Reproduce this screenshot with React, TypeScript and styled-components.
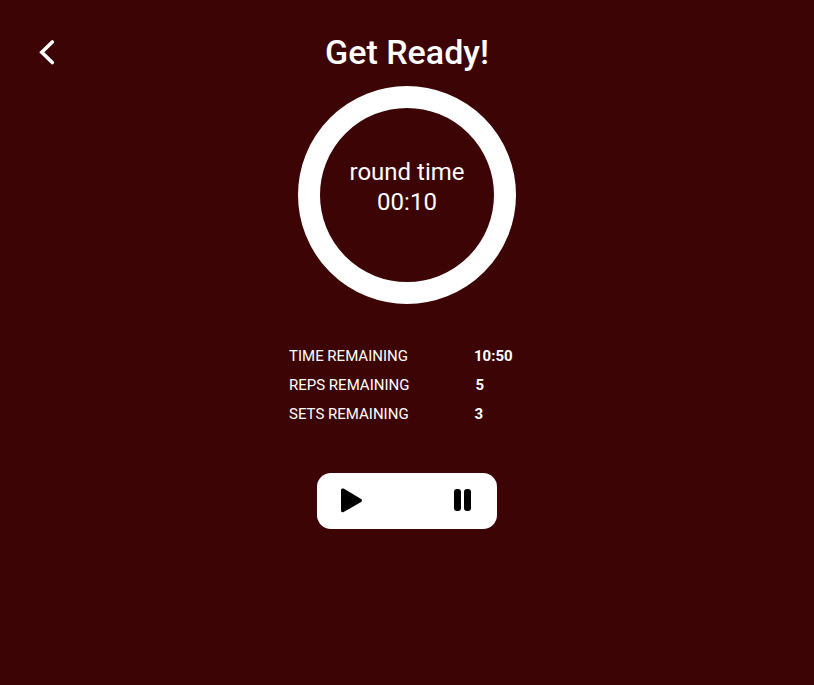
import React from "react";
import styled, { createGlobalStyle } from "styled-components";

const GlobalStyle = createGlobalStyle`
  *, *::before, *::after { box-sizing: border-box; }
  body {
    margin: 0;
    background: #3c0404;
    color: #fff;
    font-family: Roboto, "Liberation Sans", sans-serif;
  }
`;

const Page = styled.main`
  display: flex;
  flex-direction: column;
  align-items: center;
  min-height: 100vh;
  padding: 32px;
`;

const Header = styled.header`
  display: grid;
  grid-template-columns: 32px 1fr 32px;
  align-items: center;
  width: 100%;
  height: 40px;
`;

const IconButton = styled.button`
  display: flex;
  align-items: center;
  justify-content: center;
  width: 32px;
  height: 32px;
  padding: 0;
  border: 0;
  background: transparent;
  color: inherit;
  cursor: pointer;
`;

const Title = styled.h1`
  margin: 0;
  font-size: 34px;
  line-height: 38px;
  font-weight: 500;
  text-align: center;
`;

const Dial = styled.section`
  display: flex;
  flex-direction: column;
  align-items: center;
  width: 218px;
  height: 218px;
  margin-top: 14px;
  padding-top: 49px;
  border: 22px solid #fff;
  border-radius: 50%;
  font-size: 24px;
  line-height: 30px;
`;

const Stats = styled.dl`
  display: flex;
  flex-direction: column;
  width: 236px;
  margin: 38px 0 0;
`;

const Stat = styled.div`
  display: flex;
  gap: 66px;
  font-size: 15px;
  line-height: 29px;
`;

const StatName = styled.dt`
  text-transform: uppercase;
  white-space: nowrap;
`;

const StatValue = styled.dd`
  margin: 0;
  font-weight: 700;
`;

const Controls = styled.div`
  display: flex;
  justify-content: space-between;
  align-items: center;
  width: 180px;
  height: 56px;
  margin-top: 44px;
  padding: 0 18px;
  border-radius: 14px;
  background: #fff;
  color: #000;
`;

const stats = [
  { name: "Time remaining", value: "10:50" },
  { name: "Reps remaining", value: "5" },
  { name: "Sets remaining", value: "3" },
];

export default function App() {
  return (
    <>
      <GlobalStyle />
      <Page>
        <Header>
          <IconButton type="button" aria-label="Back">
            <svg width="32" height="32" viewBox="0 0 32 32" fill="none" stroke="currentColor" strokeWidth="3.6" strokeLinecap="round">
              <path d="M20.300 6 9.800 16.300l10.500 10.200" />
            </svg>
          </IconButton>
          <Title>Get Ready!</Title>
        </Header>
        <Dial>
          <span>round time</span>
          <time>00:10</time>
        </Dial>
        <Stats>
          {stats.map(({ name, value }) => (
            <Stat key={name}>
              <StatName>{name}</StatName>
              <StatValue>{value}</StatValue>
            </Stat>
          ))}
        </Stats>
        <Controls>
          <IconButton type="button" aria-label="Play">
            <svg width="32" height="32" viewBox="0 0 32 32" fill="currentColor">
              <path d="M6 5.500v20a1.800 1.800 0 0 0 2.600 1.600l17.500-10.100a1.700 1.700 0 0 0 0-2.900L8.600 3.600A1.800 1.800 0 0 0 6 5.500Z" />
            </svg>
          </IconButton>
          <IconButton type="button" aria-label="Pause">
            <svg width="32" height="32" viewBox="0 0 32 32" fill="currentColor">
              <rect x="7" y="4" width="7" height="22" rx="3" />
              <rect x="17" y="4" width="7" height="22" rx="3" />
            </svg>
          </IconButton>
        </Controls>
      </Page>
    </>
  );
}
